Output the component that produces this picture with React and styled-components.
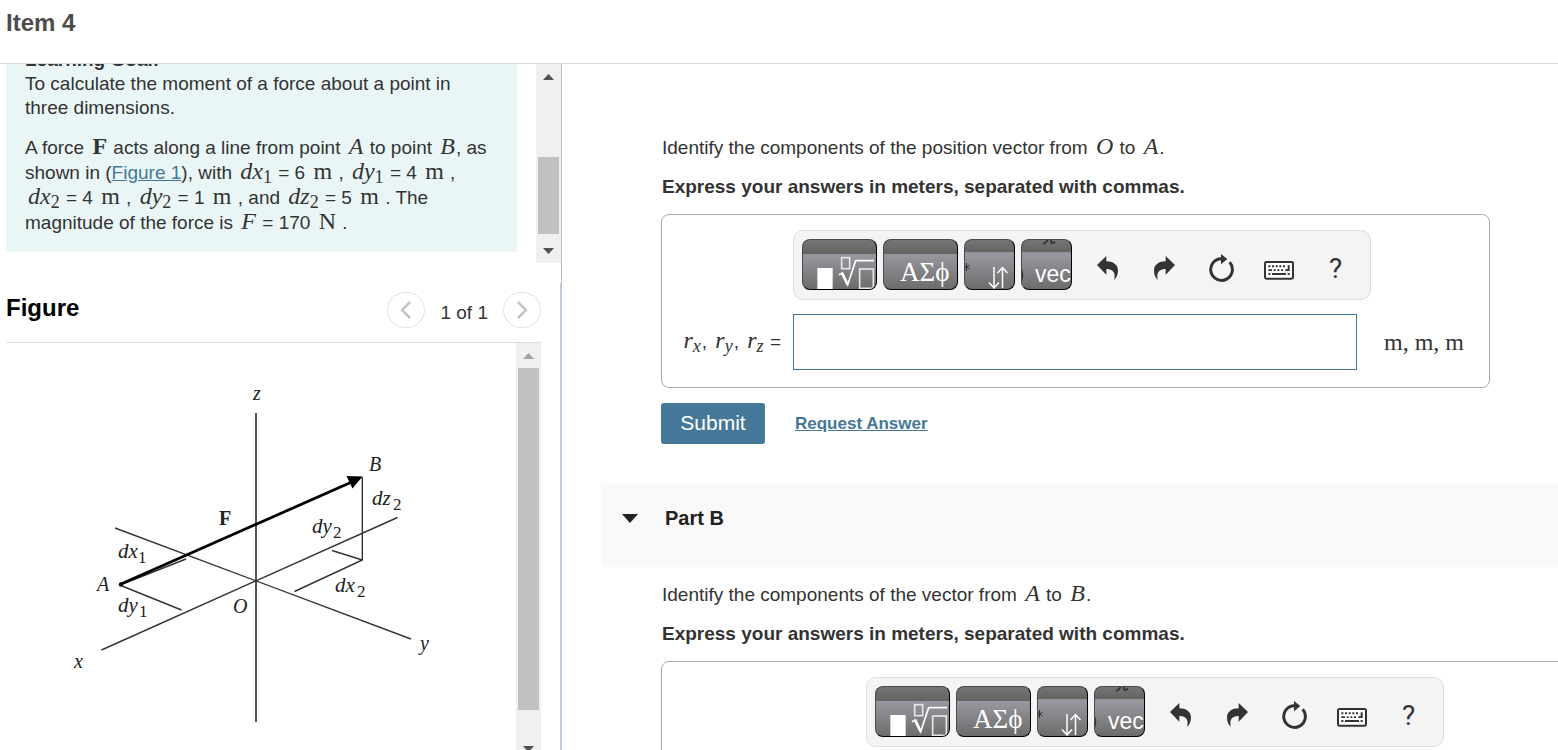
import React, { useState } from 'react'
import styled, { createGlobalStyle } from 'styled-components'

const GlobalStyle = createGlobalStyle`
*, *::before, *::after{
    box-sizing: border-box;
}
body{
    margin: 0;
    background: #fff;
    color: #333;
    font-family: "Liberation Sans", Arial, sans-serif;
    font-size: 19px;
    line-height: 24px;
}
p, h1, h2, h3{
    margin: 0;
}
button{
    font-family: inherit;
    cursor: pointer;
}
`

const Page = styled.div`
height: 100vh;
display: flex;
flex-direction: column;
overflow: hidden;
`
const TopBar = styled.header`
flex: none;
height: 64px;
padding: 9px 6px;
border-bottom: 1px solid #dcdcdc;
`
const ItemTitle = styled.h1`
color: #4c4c4c;
font-size: 24px;
line-height: 28px;
`
const Columns = styled.div`
flex: 1;
min-height: 0;
display: flex;
`
const Side = styled.aside`
flex: none;
width: 562px;
display: flex;
flex-direction: column;
`
const Intro = styled.section`
flex: none;
height: 219px;
padding-bottom: 20px;
border-right: 1px solid #b4bcc6;
display: flex;
justify-content: space-between;
`
const IntroScroll = styled.div`
flex: 1;
margin: 0 19px 0 6px;
padding-bottom: 11px;
display: flex;
flex-direction: column;
justify-content: flex-end;
overflow: hidden;
`
const Goal = styled.div`
flex: none;
padding: 17px 8px 17px 19px;
background: #eaf6f6;
display: flex;
flex-direction: column;
gap: 15px;
`
const MathParagraph = styled.p`
line-height: 25px;
`
const Link = styled.a`
color: #457898;
font-size: ${props => props.$small ? '17px' : 'inherit'};
font-weight: ${props => props.$small ? 'bold' : 'normal'};
text-decoration: underline;
`

const MathText = styled.span`
font-family: "Liberation Serif", "Times New Roman", serif;
font-size: 24px;
font-style: ${props => props.$upright ? 'normal' : 'italic'};
font-weight: ${props => props.$bold ? 'bold' : 'normal'};
line-height: 0;
padding: 0 1px 0 3px;

sub{
    font-size: 18px;
    font-style: ${props => props.$italicSub ? 'italic' : 'normal'};
    line-height: 0;
    vertical-align: -4px;
}
`
const NoWrap = styled.span`
white-space: nowrap;
`

const Track = styled.div`
flex: none;
width: 25px;
background: #f0f0f0;
display: flex;
flex-direction: column;
align-items: center;
overflow: hidden;
`
const ArrowBox = styled.span`
flex: none;
height: 25px;
display: flex;
align-items: center;

svg{
    display: block;
    fill: ${props => props.$muted ? '#a3a3a3' : '#505050'};
}
`
const Thumb = styled.span`
flex: none;
width: 21px;
height: ${props => props.$size};
margin-top: ${props => props.$start};
margin-bottom: ${props => props.$end};
background: #c1c1c1;
`

const FigurePanel = styled.section`
flex: 1;
min-height: 0;
padding: 0 19px 0 6px;
border-right: 2px solid #bfcbe0;
display: flex;
flex-direction: column;
`
const FigureHeader = styled.div`
flex: none;
height: 60px;
padding-bottom: 5px;
border-bottom: 1px solid #dcdcdc;
display: flex;
align-items: center;
justify-content: space-between;
`
const FigureTitle = styled.h2`
color: #000;
font-size: 24px;
line-height: 28px;
padding-bottom: 5px;
`
const Pager = styled.div`
display: flex;
align-items: center;
gap: 15px;
`
const PagerLabel = styled.span`
padding-top: 5px;
`
const PagerButton = styled.button`
width: 38px;
height: 36px;
padding: 0;
border: 1px solid #e4e4e4;
border-radius: 50%;
background: #fff;
display: flex;
align-items: center;
justify-content: center;
`
const FigureBody = styled.div`
flex: 1;
min-height: 0;
display: flex;
overflow: hidden;
`
const Drawing = styled.svg`
flex: none;
width: 510px;
height: 407px;
font-family: "Liberation Serif", "Times New Roman", serif;
font-size: 20px;
font-style: italic;
fill: #222;
`

const Main = styled.main`
flex: 1;
min-width: 0;
padding: 72px 0 0 39px;
overflow: hidden;
`
const Part = styled.section`
padding: 0 68px 0 60px;
display: flex;
flex-direction: column;
gap: 15px;
`
const Question = styled.p`
padding-left: 1px;
font-weight: ${props => props.$strong ? 'bold' : 'normal'};
`
const AnswerBox = styled.div`
margin-right: ${props => props.$wide ? '-120px' : '0'};
padding: 15px 0 17px;
border: 1px solid #aaa;
border-radius: 8px;
display: grid;
grid-template-columns: ${props => props.$wide ? '204px' : '131px'} 1fr 132px;
row-gap: 14px;
align-items: center;
`
const AnswerLabel = styled.label`
padding-right: 12px;
text-align: right;
white-space: nowrap;
`
const AnswerInput = styled.input`
grid-column: 2;
width: 100%;
height: 56px;
padding: 0 12px;
border: 1px solid #457898;
background: #fff;
font-family: inherit;
font-size: 19px;
`
const Units = styled.span`
padding: 4px 0 0 24px;
white-space: nowrap;
`
const Toolbar = styled.div`
grid-column: 2 / -1;
justify-self: start;
height: 70px;
padding: 0 6px 0 8px;
border: 1px solid #ddd;
border-radius: 10px;
background: #f4f4f4;
display: flex;
align-items: center;
gap: 7px;
`
const Keys = styled.div`
display: flex;
gap: 6px;
padding-bottom: 1px;
`
const Key = styled.button`
width: ${props => props.$wide ? '75px' : '51px'};
height: 51px;
padding: 0;
border: 1px solid;
border-color: #4a4a4a #000 #000 #4a4a4a;
border-radius: 8px;
background: linear-gradient(#757575, #636363) 0 0 / 100% ${props => props.$wide ? '14px' : '12px'} no-repeat,
            linear-gradient(#85858a 10%, #98979f 30%, #6c6c6c);
overflow: hidden;

svg{
    display: block;
}
`
const Tools = styled.div`
display: flex;
padding-top: 6px;
`
const Tool = styled.button`
width: 57px;
height: 52px;
padding: 0;
border: 0;
background: none;
color: #333;
font-family: Roboto, sans-serif;
font-size: 28px;
display: flex;
align-items: center;
justify-content: center;
`
const Actions = styled.div`
display: flex;
align-items: center;
gap: 30px;
`
const Submit = styled.button`
width: 104px;
height: 41px;
padding: 0 0 2px;
border: 0;
border-radius: 3px;
background: #457898;
color: #fff;
font-size: 21px;
`
const PartHeader = styled.div`
height: 84px;
margin: 39px 0 16px;
padding: 0 21px;
background: #f9f9f9;
display: flex;
align-items: flex-start;
`
const PartToggle = styled.button`
height: 70px;
padding: 0;
border: 0;
background: none;
color: #222;
font-size: 20px;
font-weight: bold;
display: flex;
align-items: center;
gap: 27px;
`

const Scrollbar = ({start, size, end = 'auto', muted}) => (
    <Track aria-hidden="true">
        <ArrowBox $muted={muted}>
            <svg width="11" height="6"><path d="M0 6 L5.5 0 L11 6Z" /></svg>
        </ArrowBox>
        <Thumb $start={start} $size={size} $end={end} />
        <ArrowBox>
            <svg width="11" height="6"><path d="M0 0 L5.5 6 L11 0Z" /></svg>
        </ArrowBox>
    </Track>
)

const Quantity = ({name, sub, value, unit}) => (
    <NoWrap>
        <MathText>{name}{sub && <sub>{sub}</sub>}</MathText> = {value} <MathText $upright>{unit}</MathText>
    </NoWrap>
)

const Component = ({axis}) => (
    <MathText $italicSub>r<sub>{axis}</sub></MathText>
)

const ForceDiagram = () => (
    <Drawing viewBox="6 343 510 407" role="img" aria-label="Force F from A to B">
        <g stroke="#333" strokeWidth="1.4" fill="none">
            <path d="M256 413V722" stroke="#555" strokeWidth="2" />
            <path d="M101.500 650L397.500 517.500" />
            <path d="M115 528L411 639" />
            <path d="M120 585L186 559" />
            <path d="M122 586L181.500 610" />
            <path d="M362.300 477V560L294.500 591.500M362.300 560L332 550.500" />
        </g>
        <path d="M121 584L354 481" stroke="#000" strokeWidth="2.8" />
        <path d="M362.500 476.500L346.500 476L352.500 488.500Z" fill="#000" />
        <circle cx="121" cy="584.500" r="2.200" fill="#000" />
        <text x="253" y="400">z</text>
        <text x="74" y="668">x</text>
        <text x="420" y="650">y</text>
        <text x="97" y="591">A</text>
        <text x="369" y="471">B</text>
        <text x="233" y="613">O</text>
        <text x="219" y="525" fontStyle="normal" fontWeight="bold">F</text>
        <g fontSize="21">
            <text x="118" y="558">dx</text>
            <text x="118" y="612">dy</text>
            <text x="335" y="592">dx</text>
            <text x="312" y="533">dy</text>
            <text x="372" y="505">dz</text>
        </g>
        <g fontStyle="normal" fontSize="17">
            <text x="138" y="563">1</text>
            <text x="139" y="617">1</text>
            <text x="357" y="597">2</text>
            <text x="333" y="538">2</text>
            <text x="393" y="510">2</text>
        </g>
    </Drawing>
)

const arrowPath = 'M0 27L28 0V16C48 16 63 26 63 44C63 56 58 66 51 71C57 54 50 38 28 39V56Z'

const MathToolbar = () => (
    <Toolbar role="toolbar" aria-label="Equation tools">
        <Keys>
            <Key $wide type="button" aria-label="Templates">
                <svg width="73" height="49" viewBox="3 3 219 147" fill="none" stroke="#fff">
                    <rect x="46" y="87" width="46" height="63" fill="#fff" stroke="none" />
                    <rect x="119" y="56" width="24" height="33" stroke="#e6e6e6" strokeWidth="5" />
                    <path d="M111 107L121 102L137 137L161 65H216" strokeWidth="5" />
                    <path d="M120 102L137 137" strokeWidth="8" />
                    <rect x="173" y="90" width="41" height="58" stroke="#e6e6e6" strokeWidth="5" />
                </svg>
            </Key>
            <Key $wide type="button" aria-label="Greek symbols">
                <svg width="73" height="49" viewBox="1 1 73 49">
                    <text x="17" y="42" fontFamily="Liberation Serif, serif" fontSize="27" fill="#fff">ΑΣϕ</text>
                </svg>
            </Key>
            <Key type="button" aria-label="Arrows and operators">
                <svg width="49" height="49" viewBox="1 1 49 49">
                    <path d="M2.500 24V32M0 26L5.500 30M0 30L5.500 26" fill="none" stroke="#333" strokeWidth="1" />
                    <path d="M30 28V49M25 43.500L30 49L35 43.500M38.500 49V29M33.500 34L38.500 28.500L43.500 34" fill="none" stroke="#fff" strokeWidth="1.500" />
                </svg>
            </Key>
            <Key type="button" aria-label="Vectors">
                <svg width="49" height="49" viewBox="1 1 49 49">
                    <path d="M22 5C25 4 26 3 27 0M30 0V3.500Q31.500 5 34 2.500" fill="none" stroke="#333" strokeWidth="1.800" />
                    <path d="M0 30Q3 36 0 42" fill="none" stroke="#333" strokeWidth="1.500" />
                    <text x="14" y="43" fontFamily="Liberation Sans, sans-serif" fontSize="23" fill="#fff">vec</text>
                </svg>
            </Key>
        </Keys>
        <Tools>
            <Tool type="button" aria-label="Undo">
                <svg width="21" height="24" viewBox="0 0 63 72"><path d={arrowPath} fill="#333" /></svg>
            </Tool>
            <Tool type="button" aria-label="Redo">
                <svg width="21" height="24" viewBox="0 0 63 72"><path d={arrowPath} fill="#333" transform="matrix(-1 0 0 1 63 0)" /></svg>
            </Tool>
            <Tool type="button" aria-label="Reset">
                <svg width="25" height="28" viewBox="0 0 75 84">
                    <path d="M62 25A32.500 32.500 0 1 1 37 14" fill="none" stroke="#333" strokeWidth="9" />
                    <path d="M36 0L55 15L36 31Z" fill="#333" />
                </svg>
            </Tool>
            <Tool type="button" aria-label="Keyboard shortcuts">
                <svg width="30" height="26" viewBox="0 -18 90 78" fill="#333">
                    <rect x="3" y="3" width="84" height="50" rx="4" fill="#fff" stroke="#333" strokeWidth="6" />
                    <path d="M13 13h6v6h-6zM24 13h6v6h-6zM35 13h6v6h-6zM46 13h6v6h-6zM57 13h6v6h-6zM71 13h6v17h-13v-5h7z" />
                    <path d="M13 25h11v5h-11zM29 25h6v5h-6zM40 25h6v5h-6zM51 25h6v5h-6z" />
                    <path d="M13 36h6v6h-6zM24 36h42v6h-42zM71 36h6v6h-6z" />
                </svg>
            </Tool>
            <Tool type="button" aria-label="Help">?</Tool>
        </Tools>
    </Toolbar>
)

const App = () => {
    const [answer, setAnswer] = useState('')
    const [answerB, setAnswerB] = useState('')

    return (
        <>
            <GlobalStyle />
            <Page>
                <TopBar>
                    <ItemTitle>Item 4</ItemTitle>
                </TopBar>
                <Columns>
                    <Side>
                        <Intro>
                            <IntroScroll>
                                <Goal>
                                    <p>
                                        <strong>Learning Goal:</strong><br />
                                        To calculate the moment of a force about a point in<br />
                                        three dimensions.
                                    </p>
                                    <MathParagraph>
                                        A force <MathText $upright $bold>F</MathText> acts along a line from point <MathText>A</MathText> to point <MathText>B</MathText>, as<br />
                                        shown in (<Link href="#figure">Figure 1</Link>), with <Quantity name="dx" sub="1" value="6" unit="m" /> , <Quantity name="dy" sub="1" value="4" unit="m" /> ,<br />
                                        <Quantity name="dx" sub="2" value="4" unit="m" /> , <Quantity name="dy" sub="2" value="1" unit="m" /> , and <Quantity name="dz" sub="2" value="5" unit="m" /> . The<br />
                                        magnitude of the force is <Quantity name="F" value="170" unit="N" /> .
                                    </MathParagraph>
                                </Goal>
                            </IntroScroll>
                            <Scrollbar start="68px" size="77px" />
                        </Intro>
                        <FigurePanel id="figure">
                            <FigureHeader>
                                <FigureTitle>Figure</FigureTitle>
                                <Pager>
                                    <PagerButton type="button" aria-label="Previous figure">
                                        <svg width="12" height="18" fill="none" stroke="#c4c4c4" strokeWidth="2.500"><path d="M10 1L2 9L10 17" /></svg>
                                    </PagerButton>
                                    <PagerLabel>1 of 1</PagerLabel>
                                    <PagerButton type="button" aria-label="Next figure">
                                        <svg width="12" height="18" fill="none" stroke="#c4c4c4" strokeWidth="2.500"><path d="M2 1L10 9L2 17" /></svg>
                                    </PagerButton>
                                </Pager>
                            </FigureHeader>
                            <FigureBody>
                                <ForceDiagram />
                                <Scrollbar start="0" size="calc(100% - 65px)" end="26px" muted />
                            </FigureBody>
                        </FigurePanel>
                    </Side>
                    <Main>
                        <Part>
                            <Question>
                                Identify the components of the position vector from <MathText>O</MathText> to <MathText>A</MathText>.
                            </Question>
                            <Question $strong>Express your answers in meters, separated with commas.</Question>
                            <AnswerBox>
                                <MathToolbar />
                                <AnswerLabel htmlFor="answer-a">
                                    <Component axis="x" />, <Component axis="y" />, <Component axis="z" /> =
                                </AnswerLabel>
                                <AnswerInput id="answer-a" value={answer} onChange={e => setAnswer(e.target.value)} />
                                <Units><MathText $upright>m, m, m</MathText></Units>
                            </AnswerBox>
                            <Actions>
                                <Submit type="button">Submit</Submit>
                                <Link $small href="#answer">Request Answer</Link>
                            </Actions>
                        </Part>
                        <PartHeader>
                            <PartToggle type="button" aria-expanded="true">
                                <svg width="16" height="9"><path d="M0 0H16L8 9Z" fill="#222" /></svg>
                                Part B
                            </PartToggle>
                        </PartHeader>
                        <Part>
                            <Question>
                                Identify the components of the vector from <MathText>A</MathText> to <MathText>B</MathText>.
                            </Question>
                            <Question $strong>Express your answers in meters, separated with commas.</Question>
                            <AnswerBox $wide>
                                <MathToolbar />
                                <AnswerInput aria-label="Components of the vector from A to B" value={answerB} onChange={e => setAnswerB(e.target.value)} />
                            </AnswerBox>
                        </Part>
                    </Main>
                </Columns>
            </Page>
        </>
    )
}

export default App
